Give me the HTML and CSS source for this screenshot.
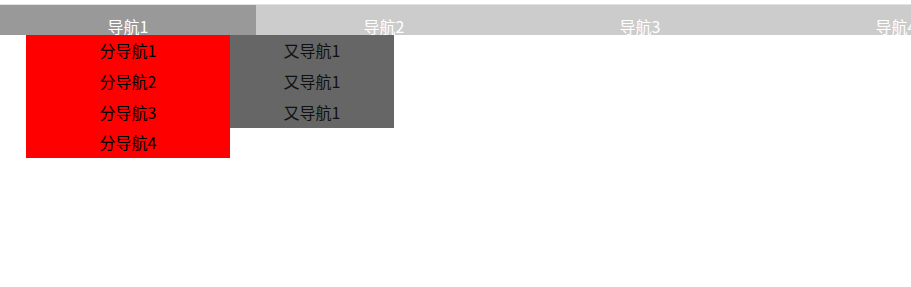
FILE: index.html
```html
<!DOCTYPE html>
<html lang="zh">
<head>
<meta charset="utf-8">
<title>导航</title>
<link rel="stylesheet" href="styles.css">
</head>
<body>
<ul class="nav">
  <li class="nav-item active">
    <span class="nav-label">导航1</span>
    <ul class="sub">
      <li class="sub-item">分导航1
        <ul class="subsub">
          <li class="subsub-item">又导航1</li>
          <li class="subsub-item">又导航1</li>
          <li class="subsub-item">又导航1</li>
        </ul>
      </li>
      <li class="sub-item">分导航2</li>
      <li class="sub-item">分导航3</li>
      <li class="sub-item">分导航4</li>
    </ul>
  </li>
  <li class="nav-item"><span class="nav-label">导航2</span></li>
  <li class="nav-item"><span class="nav-label">导航3</span></li>
  <li class="nav-item"><span class="nav-label">导航4</span></li>
</ul>
</body>
</html>
```
FILE: styles.css
```css
html, body {
  margin: 0;
  padding: 0;
  background: #fff;
}
body {
  font-family: "Noto Sans CJK SC", "Noto Sans", sans-serif;
  font-size: 16px;
  min-height: 287px;
}
ul {
  list-style: none;
  margin: 0;
  padding: 0;
}
.nav {
  display: flex;
  margin-top: 4px;
  border-top: 1px solid #e2e2e2;
  width: 1024px;
}
.nav-item {
  position: relative;
  flex: 0 0 256px;
  height: 30px;
  background: #cccccc;
  color: #fff;
  text-align: center;
  display: flex;
  flex-direction: column;
  justify-content: flex-end;
}
.nav-item.active {
  background: #999999;
}
.nav-label {
  display: block;
  line-height: 18px;
}
.sub {
  position: absolute;
  top: 30px;
  left: 26px;
  width: 204px;
  background: #ff0000;
  color: #000;
  z-index: 5;
}
.sub-item {
  position: relative;
  height: 30.75px;
  line-height: 30.75px;
}
.subsub {
  position: absolute;
  top: 0;
  left: 204px;
  width: 164px;
  background: #666666;
  color: #111;
}
.subsub-item {
  height: 31px;
  line-height: 31px;
}
```
